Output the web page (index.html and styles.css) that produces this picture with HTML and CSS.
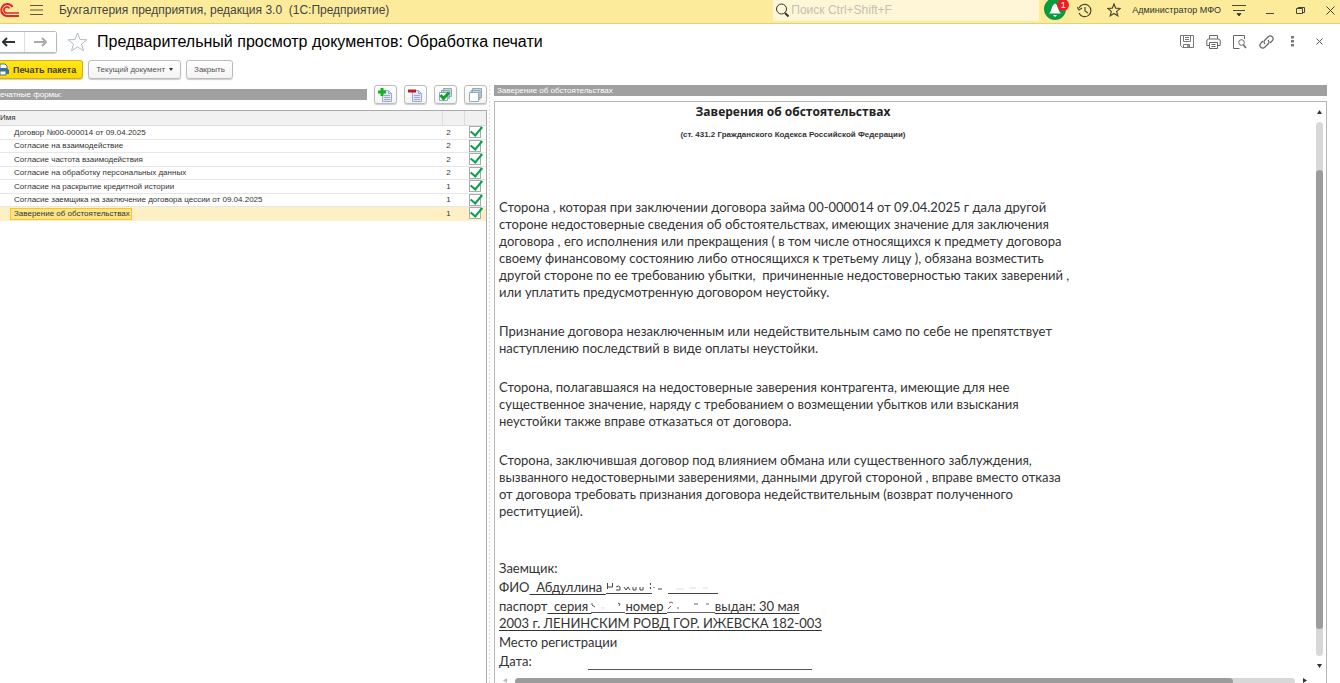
FILE: index.html
```html
<!DOCTYPE html>
<html lang="ru">
<head>
<meta charset="utf-8">
<title>Предварительный просмотр документов</title>
<link rel="stylesheet" href="styles.css">
</head>
<body>
<div class="app">
  <header class="topbar">
    <svg class="logo" width="19" height="18" viewBox="0 0 19 18" fill="none" stroke="#e3262b" stroke-width="2"><path d="M12.500 6A6 6 0 1 0 6.500 15H19"/><path d="M9.500 7.500A3 3 0 1 0 7 12H19" stroke-width="1.700"/></svg>
    <button class="icon-btn menu" aria-label="Меню"><svg width="13" height="12" viewBox="0 0 13 12" stroke="#5c5640" stroke-width="1.200"><path d="M0 1.500h13M0 6h13M0 10.500h13"/></svg></button>
    <span class="app-name">Бухгалтерия предприятия, редакция 3.0 &nbsp;(1С:Предприятие)</span>
    <label class="search">
      <svg width="15" height="15" viewBox="0 0 15 15" fill="none" stroke="#333"><circle cx="6.500" cy="6" r="5"/><path d="M10 10l3.500 3.500" stroke-width="2"/></svg>
      <input type="text" placeholder="Поиск Ctrl+Shift+F" aria-label="Поиск">
    </label>
    <button class="icon-btn bell" aria-label="Уведомления"><svg width="24" height="22" viewBox="0 0 24 22"><circle cx="11" cy="10" r="11" fill="#0a9b3f"/><path d="M5 14.500c3-2 2-8 6-10 4 2 3 8 6 10z" fill="#fff"/><path d="M9 16h4l-2 2z" fill="#fff"/></svg><span class="badge">1</span></button>
    <button class="icon-btn history" aria-label="История"><svg width="15" height="15" viewBox="0 0 15 15" fill="none" stroke="#4c4836" stroke-width="1.200"><path d="M2 5A6.200 6.200 0 1 1 2 10"/><path d="M0 4l2 3 3-2M8 4v4l3 2"/></svg></button>
    <button class="icon-btn fav" aria-label="Избранное"><svg width="14" height="14" viewBox="0 0 14 14" fill="none" stroke="#4c4836" stroke-width="1.200"><path d="M7 1l1.700 4.200 4.500.3-3.500 2.900 1.100 4.400L7 10.400l-3.800 2.400 1.100-4.400L.8 5.500l4.500-.3z"/></svg></button>
    <a class="user" href="#">Администратор МФО</a>
    <button class="icon-btn settings" aria-label="Настройки"><svg width="14" height="13" viewBox="0 0 14 13" stroke="#4c4836"><path d="M0 1.500h14M1 6.500h12"/><path d="M5 9.500h4l-2 2.500z" fill="#333"/></svg></button>
    <button class="icon-btn min" aria-label="Свернуть"><svg width="9" height="9" viewBox="0 0 9 9" stroke="#444"><path d="M1 7.500h8"/></svg></button>
    <button class="icon-btn restore" aria-label="Развернуть"><svg width="9" height="9" viewBox="0 0 9 9" fill="none" stroke="#444"><path d="M.5 2.500h6v5h-6zM2 2.500v-1h6.500v5h-2"/></svg></button>
    <button class="icon-btn close" aria-label="Закрыть окно"><svg width="9" height="9" viewBox="0 0 9 9" stroke="#444"><path d="M.5.5l8 8M8.500.5l-8 8"/></svg></button>
  </header>

  <div class="titlebar">
    <div class="nav">
      <button aria-label="Назад"><svg width="13" height="10" viewBox="0 0 13 10" fill="none" stroke="#333" stroke-width="2"><path d="M1 5h12M5 1L1 5l4 4"/></svg></button>
      <button aria-label="Вперёд"><svg width="13" height="10" viewBox="0 0 13 10" fill="none" stroke="#aaa" stroke-width="2"><path d="M0 5h12M8 1l4 4-4 4"/></svg></button>
    </div>
    <button class="icon-btn star" aria-label="В избранное"><svg width="21" height="20" viewBox="0 0 21 20" fill="none" stroke="#b4bac2"><path d="M10.500 1l2.500 6.500 7 .3-5.500 4.300 2 6.700-6-3.900-6 3.900 2-6.700L1 7.800l7-.3z"/></svg></button>
    <h1>Предварительный просмотр документов: Обработка печати</h1>
    <div class="tools">
      <button class="icon-btn" aria-label="Сохранить"><svg width="14" height="14" viewBox="0 0 14 14" fill="none" stroke="#777"><path d="M.5.5h13v12h-11l-2-2zM3.500.5v6h7v-6M5 2.500h4M5 4.500h4M3.500 12.500v-3h6v3"/><path d="M7.500 10.500h1v1h-1z"/></svg></button>
      <button class="icon-btn" aria-label="Печать"><svg width="15" height="14" viewBox="0 0 15 14" fill="none" stroke="#666"><path d="M3.500 4V.5h8V4M3 10.500H.8V6q0-2 2-2h9.400q2 0 2 2v4.500H12M3.500 7.500h8v6h-8zM5.500 9.500h4M5.500 11.500h4"/></svg></button>
      <button class="icon-btn" aria-label="Просмотр"><svg width="14" height="14" viewBox="0 0 14 14" fill="none" stroke="#666"><path d="M11.500 4V.5H.5v13h6"/><circle cx="8.500" cy="7.500" r="2.800"/><path d="M10.500 10l2.500 3" stroke-width="1.500"/></svg></button>
      <button class="icon-btn" aria-label="Ссылка"><svg width="15" height="14" viewBox="0 0 15 14" fill="none" stroke="#666" stroke-width="1.200"><path d="M6 9C4 7 5 6 6 5l3-3c3-3 7 1 4 4l-2 2"/><path d="M9 5c2 2 1 3 0 4l-3 3c-3 3-7-1-4-4l2-2"/></svg></button>
      <button class="icon-btn" aria-label="Ещё"><svg width="3" height="11" viewBox="0 0 3 11" fill="#777"><path d="M0 0h3v2.500H0zM0 4h3v2.500H0zM0 8h3v2.500H0z"/></svg></button>
      <button class="icon-btn" aria-label="Закрыть форму"><svg width="7" height="7" viewBox="0 0 7 7" stroke="#555"><path d="M.5.5l6 6M6.500.5l-6 6"/></svg></button>
    </div>
  </div>

  <div class="commands">
    <button class="btn primary"><svg width="10" height="13" viewBox="0 0 10 13"><path d="M0 1h5l2 2v3H0z" fill="#fff" stroke="#44708e"/><path d="M0 5h7l2 2v4H0z" fill="#3d7296"/><path d="M0 8h6v4H0z" fill="#fff" stroke="#44708e"/></svg>Печать пакета</button>
    <button class="btn">Текущий документ<svg class="caret" width="4" height="3" viewBox="0 0 4 3"><path d="M0 0h4L2 3z" fill="#333"/></svg></button>
    <button class="btn">Закрыть</button>
  </div>

  <main class="panes">
    <section class="forms">
      <div class="forms-head">
        <h2 class="caption">ечатные формы:</h2>
        <button class="btn tool" aria-label="Добавить"><svg width="15" height="14" viewBox="0 0 15 14"><path d="M4.500 2.500h6l3 3v8h-9z" fill="#e1e7f6" stroke="#9cabcc"/><path d="M10.500 2.500v3h3M6 7.500h6M6 9.500h6M6 11.500h6" fill="none" stroke="#9cabcc"/><path d="M0 4h8M4 0v8" stroke="#14b41c" stroke-width="3"/></svg></button>
        <button class="btn tool" aria-label="Удалить"><svg width="15" height="14" viewBox="0 0 15 14"><path d="M4.500 2.500h6l3 3v8h-9z" fill="#e1e7f6" stroke="#9cabcc"/><path d="M10.500 2.500v3h3M6 7.500h6M6 9.500h6M6 11.500h6" fill="none" stroke="#9cabcc"/><path d="M0 3h8" stroke="#b52026" stroke-width="3"/></svg></button>
        <button class="btn tool" aria-label="Отметить все"><svg width="15" height="14" viewBox="0 0 15 14" fill="#c3d7e0" stroke="#8eabb8"><path d="M5.500.5h8v8h-8zM3.500 2.500h8v8h-8z"/><path d="M1.500 4.500h8v8h-8z" fill="#fff"/><path d="M2.500 7l3 3.500L11 4.500" fill="none" stroke="#0aa52a" stroke-width="3"/></svg></button>
        <button class="btn tool" aria-label="Снять отметки"><svg width="15" height="14" viewBox="0 0 15 14" fill="#c3d7e0" stroke="#8eabb8"><path d="M4.500.5h9v9h-9zM3 2.500h9v9H3z"/><path d="M1.500 4.500h9v9h-9z" fill="#fff"/></svg></button>
      </div>
      <div class="table-box">
        <table>
          <thead><tr><th>Имя</th><th class="num"></th><th class="chk"></th></tr></thead>
          <tbody>
            <tr><td><span>Договор №00-000014 от 09.04.2025</span></td><td class="num">2</td><td class="chk"><input type="checkbox" checked aria-label="Договор"></td></tr>
            <tr><td><span>Согласие на взаимодействие</span></td><td class="num">2</td><td class="chk"><input type="checkbox" checked aria-label="Взаимодействие"></td></tr>
            <tr><td><span>Согласие частота взаимодействия</span></td><td class="num">2</td><td class="chk"><input type="checkbox" checked aria-label="Частота"></td></tr>
            <tr><td><span>Согласие на обработку персональных данных</span></td><td class="num">2</td><td class="chk"><input type="checkbox" checked aria-label="Персональные данные"></td></tr>
            <tr><td><span>Согласие на раскрытие кредитной истории</span></td><td class="num">1</td><td class="chk"><input type="checkbox" checked aria-label="Кредитная история"></td></tr>
            <tr><td><span>Согласие заемщика на заключение договора цессии от 09.04.2025</span></td><td class="num">1</td><td class="chk"><input type="checkbox" checked aria-label="Цессия"></td></tr>
            <tr class="selected"><td><span>Заверение об обстоятельствах</span></td><td class="num">1</td><td class="chk"><input type="checkbox" checked aria-label="Заверение"></td></tr>
          </tbody>
        </table>
      </div>
    </section>
    <div class="splitter"></div>
    <section class="preview">
      <h2 class="caption">Заверение об обстоятельствах</h2>
      <div class="viewer">
        <article class="doc">
          <h3>Заверения об обстоятельствах</h3>
          <p class="sub">(ст. 431.2 Гражданского Кодекса Российской Федерации)</p>
          <p>Сторона , которая при заключении договора займа 00-000014 от 09.04.2025 г дала другой<br>стороне недостоверные сведения об обстоятельствах, имеющих значение для заключения<br>договора , его исполнения или прекращения ( в том числе относящихся к предмету договора<br>своему финансовому состоянию либо относящихся к третьему лицу ), обязана возместить<br>другой стороне по ее требованию убытки,&nbsp; причиненные недостоверностью таких заверений ,<br>или уплатить предусмотренную договором неустойку.</p>
          <p>Признание договора незаключенным или недействительным само по себе не препятствует<br>наступлению последствий в виде оплаты неустойки.</p>
          <p>Сторона, полагавшаяся на недостоверные заверения контрагента, имеющие для нее<br>существенное значение, наряду с требованием о возмещении убытков или взыскания<br>неустойки также вправе отказаться от договора.</p>
          <p>Сторона, заключившая договор под влиянием обмана или существенного заблуждения,<br>вызванного недостоверными заверениями, данными другой стороной , вправе вместо отказа<br>от договора требовать признания договора недействительным (возврат полученного<br>реституцией).</p>
          <div class="sign">
            <div>Заемщик:</div>
            <div>ФИО<u>&nbsp; Абдуллина </u><svg width="112" height="17" viewBox="0 0 112 17" fill="none" stroke="#444"><path d="M1.500 4v6M1.500 8h5M6.500 4v4M10 8q3-2 4 0v3M10 11h4M18 8l2 3 2-3 2 3M27 8v3h3V8M34 8v3h3V8M44.500 4v2M44.500 8v2M48 8v1M52 10h4"/><path d="M0 14.500h46M62 14.500h50" /><path d="M70 10h8M84 9h6M97 9h5" stroke="#ddd"/></svg></div>
            <div class="tight">паспорт<u>&nbsp; серия </u><svg width="34" height="17" viewBox="0 0 34 17" fill="none" stroke="#555"><path d="M1 5v2l3 2M27 5l2 1-1 2"/><path d="M0 14.500h34"/><path d="M10 10h4" stroke="#ddd"/></svg><u>номер </u><svg width="48" height="17" viewBox="0 0 48 17" fill="none" stroke="#666"><path d="M2 5q2-2 4 0M1 11l3-3M10 10h2M27 6h4M39 6h3"/><path d="M0 14.500h48"/></svg><u>выдан: 30 мая</u></div>
            <div><u>2003 г. ЛЕНИНСКИМ РОВД ГОР. ИЖЕВСКА 182-003</u></div>
            <div>Место регистрации</div>
            <div class="date"><span>Дата:</span><i></i></div>
          </div>
        </article>
        <div class="vbar">
          <svg width="5" height="4" viewBox="0 0 5 4"><path d="M0 4h5L2.500 0z" fill="#333"/></svg>
          <div class="vtrack"><div class="vthumb"></div></div>
          <svg width="5" height="4" viewBox="0 0 5 4"><path d="M0 0h5L2.500 4z" fill="#333"/></svg>
        </div>
        <div class="hbar">
          <svg width="4" height="5" viewBox="0 0 4 5"><path d="M4 0v5L0 2.500z" fill="#bbb"/></svg>
          <div class="htrack"><div class="hthumb"></div></div>
          <svg width="4" height="5" viewBox="0 0 4 5"><path d="M0 0v5l4-2.500z" fill="#333"/></svg>
        </div>
      </div>
    </section>
  </main>
</div>
</body>
</html>
```
FILE: styles.css
```css
* { box-sizing: border-box; }
body { margin: 0; background: #fff; color: #333; font: 8px/12px "Liberation Sans", sans-serif; }
h1, h2, h3, p { margin: 0; font-weight: normal; }
button { font: inherit; color: inherit; padding: 0; }
svg { display: block; flex: none; }
.app { display: flex; flex-direction: column; height: 100vh; overflow: hidden; }

.icon-btn { display: flex; align-items: center; justify-content: center; border: 0; background: none; }

.topbar { display: flex; align-items: center; flex: none; height: 24px; padding: 0 5px 3px 0; background: #fdeb9c; border-bottom: 1px solid #e3cf80; }
.menu { margin-left: 11px; }
.app-name { margin-left: 16px; font-size: 12px; line-height: 20px; color: #444; white-space: nowrap; }
.search { display: flex; align-items: center; width: 266px; height: 21px; margin-left: auto; padding-left: 2px; background: #fff6d8; }
.search input { flex: 1; min-width: 0; padding: 0 1px; border: 0; outline: 0; background: none; font: 12px/16px "Liberation Sans", sans-serif; }
.search input::placeholder { color: #c4c0b4; opacity: 1; }
.bell { position: relative; margin-left: 5px; }
.badge { position: absolute; top: 0; right: -1px; width: 12px; height: 12px; border-radius: 50%; background: #ee1c24; color: #fff; font-size: 9px; line-height: 12px; text-align: center; }
.history { margin-left: 9px; }
.fav { margin-left: 15px; }
.user { margin: 0 11px; font: 9px/12px "Liberation Sans", sans-serif; color: #333; text-decoration: none; white-space: nowrap; }
.min { margin-left: 19px; }
.restore { margin-left: 22px; }
.close { margin-left: 21px; }

.titlebar { display: flex; align-items: center; flex: none; height: 35px; padding-right: 17px; }
.nav { display: flex; width: 57px; height: 22px; border: 1px solid #b9b9b9; border-left: 0; border-radius: 0 3px 3px 0; box-shadow: 0 1px 1px #ccc; }
.nav button { display: flex; align-items: center; justify-content: center; flex: 1; border: 0; background: #fff; }
.nav button:first-child { flex: 0 0 25px; justify-content: flex-start; padding-left: 2px; border-right: 1px solid #ddd; }
.star { margin-left: 10px; }
h1 { margin-left: 9px; font-size: 16px; line-height: 20px; color: #000; white-space: nowrap; }
.tools { display: flex; align-items: center; gap: 12px; margin-left: auto; }
.tools button:nth-child(n+5) { margin-left: 5px; }
.tools button:nth-child(6) { margin-left: 10px; }

.commands { display: flex; flex: none; gap: 5px; height: 25px; padding-top: 1px; }
.btn { display: flex; align-items: center; height: 19px; padding: 0 8px; border: 1px solid #bcbcbc; border-radius: 3px; background: linear-gradient(#fff, #f3f3f3); box-shadow: 0 1px 1px #ccc; color: #555; white-space: nowrap; }
.commands .btn:nth-child(n+2) { padding: 0 7px; }
.commands .primary { gap: 3px; padding: 0 6px 0 0; font-size: 9px; border-color: #d5b300; border-left: 0; border-radius: 0 3px 3px 0; background: linear-gradient(#ffe71a, #ffd800); color: #4a4000; font-weight: bold; }
.caret { margin-left: 4px; }

.panes { display: flex; flex: 1; min-height: 0; }
.forms { display: flex; flex-direction: column; width: 487px; flex: none; }
.forms-head { display: flex; align-items: center; flex: none; gap: 7px; height: 21px; }
.forms-head .caption { flex: 1; }
.caption { height: 11px; background: #a0a0a0; color: #fff; font-size: 8px; line-height: 11px; }
.forms-head .tool { justify-content: center; width: 23px; padding: 0; }
.table-box { flex: 1; margin-top: 5px; border-top: 1px solid #aaa; border-right: 1px solid #aaa; }
table { width: 100%; border-collapse: separate; border-spacing: 0; table-layout: fixed; }
th { height: 15px; padding: 0; background: #f1f1f1; border-bottom: 1px solid #ddd; font-weight: normal; text-align: left; line-height: 12px; }
td { height: 13px; padding: 0; border-bottom: 1px solid #e6e6e6; line-height: 10px; white-space: nowrap; }
tbody tr:nth-child(odd) td { height: 14px; }
td:first-child { padding-left: 11px; }
td span { display: inline-block; padding: 0 1px 0 3px; }
.num { width: 22px; text-align: center; }
td.num { padding-right: 9px; }
th.num, th.chk { border-left: 1px solid #ddd; }
.chk { width: 22px; }
td.chk { vertical-align: top; }
.chk input { display: block; appearance: none; width: 12px; height: 12px; margin: 0 auto; border: 1px solid #aaa; background: #fff; position: relative; }
.chk input::after { content: ""; position: absolute; left: 3px; top: -3px; width: 5px; height: 10px; border: solid #05a04c; border-width: 0 2px 2px 0; transform: rotate(40deg); }
.selected td { background: #fdf0c4; border-color: #fdf0c4; }
.selected td span { background: #fde48a; outline: 1px solid #f7c81e; }

.splitter { flex: none; width: 7px; background: radial-gradient(circle, #ddd 1px, transparent 1px) 1px 0 / 3px 4px; background-clip: content-box; padding: 0 3px 0 1px; }

.preview { display: flex; flex-direction: column; flex: 1; min-width: 0; margin-right: 13px; }
.preview .caption { flex: none; margin-top: 1px; padding-left: 3px; }
.viewer { display: grid; grid-template: minmax(0, 1fr) 5px / minmax(0, 1fr) 14px; flex: 1; min-height: 0; margin-top: 5px; border: 1px solid #b5b5b5; border-bottom: 0; }
.doc { overflow: hidden; padding: 1px 4px 0; font: 13px/17px Lato, "Noto Sans", sans-serif; color: #333; white-space: nowrap; }
.doc h3, .doc .sub { width: 588px; font-family: "Open Sans", sans-serif; font-weight: bold; text-align: center; }
.doc h3 { font-size: 12px; color: #222; }
.doc .sub { margin: 6px 0 56px; font-family: "Liberation Sans", sans-serif; font-size: 8px; }
.doc p { margin-bottom: 22px; }
.sign { display: grid; gap: 2px; margin-top: 40px; }
.sign div { display: flex; white-space: pre; }
.sign .tight { margin-bottom: -2px; }
.sign u { text-underline-offset: 2px; }
.date i { width: 224px; margin-left: 56px; border-bottom: 1px solid #555; }

.vbar { display: flex; flex-direction: column; align-items: center; gap: 8px; padding: 8px 0 10px; }
.vtrack { flex: 1; width: 7px; border-radius: 4px; background: #d8d8d8; }
.vthumb { width: 7px; height: 86%; border-radius: 4px; background: #9c9c9c; position: relative; top: 9%; }
.hbar { display: flex; grid-column: 1 / 3; gap: 8px; padding: 0 19px 0 8px; overflow: hidden; }
.htrack { flex: 1; height: 7px; border-radius: 4px; background: #d8d8d8; }
.hthumb { width: 92%; height: 7px; border-radius: 4px; background: #9c9c9c; }
```
